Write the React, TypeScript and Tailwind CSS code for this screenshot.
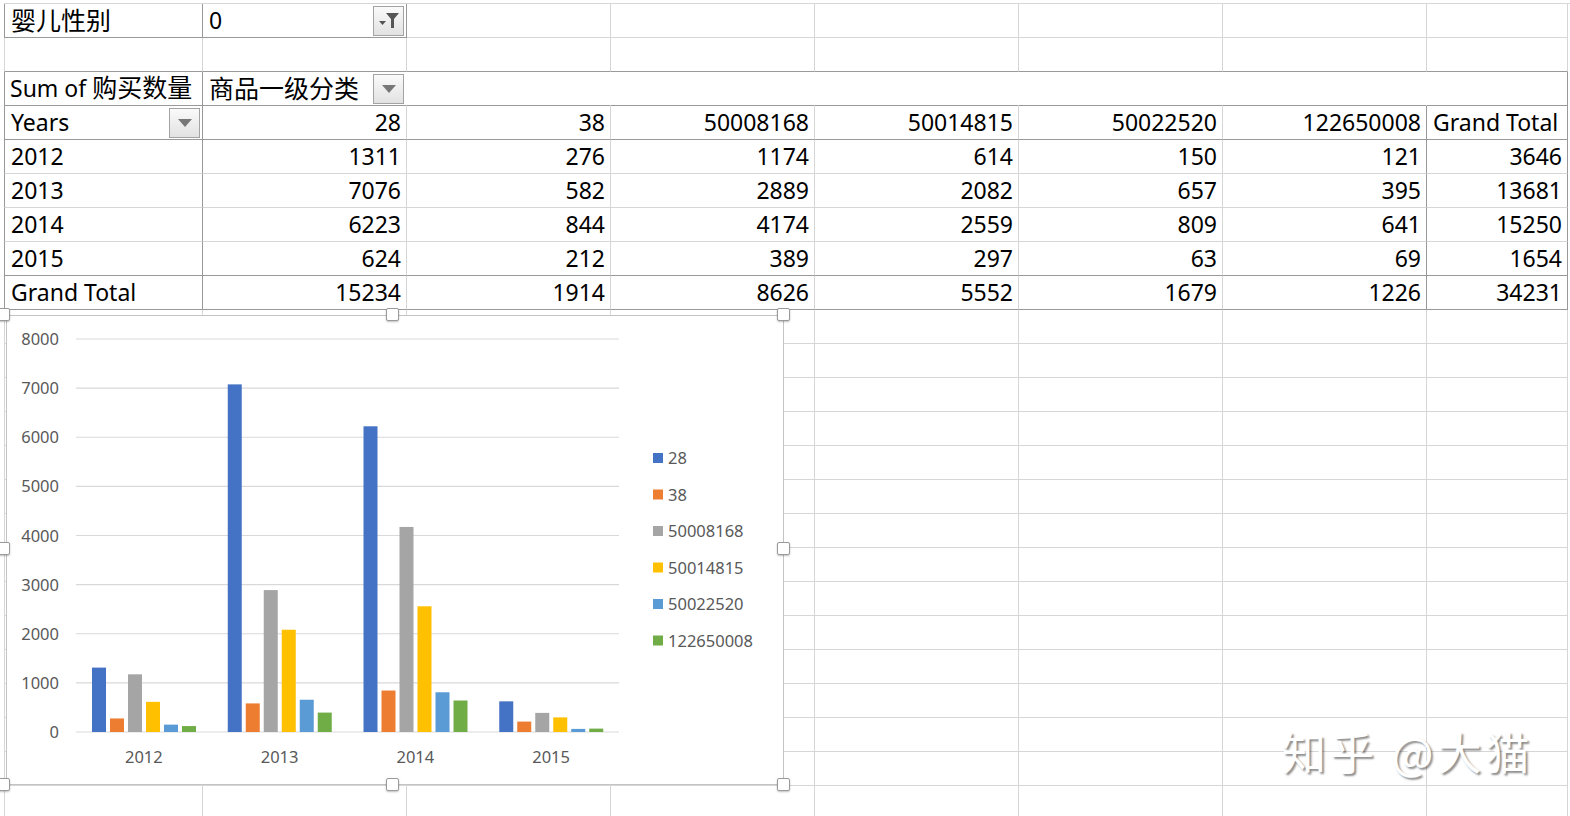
const DARK = 'dark';
const LIGHT = 'light';
const NONE = 'none';

const pivot: (string | number)[][] = [
  ['2012', 1311, 276, 1174, 614, 150, 121, 3646],
  ['2013', 7076, 582, 2889, 2082, 657, 395, 13681],
  ['2014', 6223, 844, 4174, 2559, 809, 641, 15250],
  ['2015', 624, 212, 389, 297, 63, 69, 1654],
  ['Grand Total', 15234, 1914, 8626, 5552, 1679, 1226, 34231],
];

const headers = ['28', '38', '50008168', '50014815', '50022520', '122650008'];
const seriesColors = ['#4472C4', '#ED7D31', '#A5A5A5', '#FFC000', '#5B9BD5', '#70AD47'];

const ROWS = 24;
const COLS = 8;

function rightBorder(r: number, c: number) {
  if (r === 0) return c <= 1 ? DARK : LIGHT;
  if (r === 2) return c === 0 || c === 7 ? DARK : NONE;
  if (r >= 3 && r <= 8) return c === 0 || c === 6 || c === 7 ? DARK : LIGHT;
  return LIGHT;
}

function bottomBorder(r: number, c: number) {
  if (r === 0) return c <= 1 ? DARK : LIGHT;
  if (r === 1 || r === 2 || r === 3 || r === 7 || r === 8) return DARK;
  return LIGHT;
}

const rCls = {
  dark: 'border-r-[#999999]',
  light: 'border-r-[#d6d6d6]',
  none: 'border-r-transparent',
};
const bCls = {
  dark: 'border-b-[#999999]',
  light: 'border-b-[#d6d6d6]',
  none: 'border-b-transparent',
};

const DropButton = ({ filter }: { filter?: boolean }) => (
  <div className="absolute right-[2px] top-[2px] w-[31px] h-[30px] border border-[#a3a3a3] bg-gradient-to-b from-[#fafafa] to-[#e2e2e2] flex items-center justify-center">
    {filter ? (
      <svg width="26" height="24" viewBox="0 0 26 24">
        <polygon points="3,12 10,12 6.5,16" fill="#555" />
        <polygon points="10,4 23,4 18,10 18,19 15,19 15,10" fill="#555" />
      </svg>
    ) : (
      <svg width="20" height="12" viewBox="0 0 20 12">
        <polygon points="3,2 17,2 10,10" fill="#777" />
      </svg>
    )}
  </div>
);

const Cjk = ({ children }: { children: string }) => (
  <span className="text-[25px] leading-none">{children}</span>
);

function cellContent(r: number, c: number) {
  if (r === 0) {
    if (c === 0) return <Cjk>婴儿性别</Cjk>;
    if (c === 1)
      return (
        <>
          <span>0</span>
          <DropButton filter />
        </>
      );
  }
  if (r === 2) {
    if (c === 0)
      return (
        <span className="-ml-[1px]">
          Sum of <Cjk>购买数量</Cjk>
        </span>
      );
    if (c === 1)
      return (
        <>
          <Cjk>商品一级分类</Cjk>
          <DropButton />
        </>
      );
  }
  if (r === 3) {
    if (c === 0)
      return (
        <>
          <span>Years</span>
          <DropButton />
        </>
      );
    if (c >= 1 && c <= 6) return <span className="ml-auto">{headers[c - 1]}</span>;
    if (c === 7) return <span>Grand Total</span>;
  }
  if (r >= 4 && r <= 8) {
    const v = pivot[r - 4][c];
    if (c === 0) return <span>{v}</span>;
    return <span className="ml-auto">{v}</span>;
  }
  return null;
}

// chart geometry, relative to the chart box
const CH_W = 778;
const CH_H = 470;
const baseY = 416;
const perUnit = 0.049125;
const plotL = 69;
const plotR = 612;
const catW = (plotR - plotL) / 4;

const ChartSvg = () => (
  <svg width={CH_W} height={CH_H} className="block" style={{ fontFamily: '"Noto Sans", sans-serif' }}>
    {[0, 1000, 2000, 3000, 4000, 5000, 6000, 7000, 8000].map((v) => {
      const y = baseY - v * perUnit;
      return (
        <g key={v}>
          <line x1={plotL} x2={plotR} y1={y} y2={y} stroke="#d9d9d9" strokeWidth="1.2" />
          <text x={52} y={y + 6} textAnchor="end" fontSize="16.5" fill="#595959">
            {v}
          </text>
        </g>
      );
    })}
    {pivot.slice(0, 4).map((row, i) => (
      <g key={i}>
        {row.slice(1, 7).map((v, j) => {
          const h = (v as number) * perUnit;
          return (
            <rect
              key={j}
              x={plotL + 16 + i * catW + j * 18}
              y={baseY - h}
              width={14}
              height={h}
              fill={seriesColors[j]}
            />
          );
        })}
        <text x={plotL + catW * (i + 0.5)} y={447} textAnchor="middle" fontSize="16.5" fill="#595959">
          {row[0]}
        </text>
      </g>
    ))}
    {headers.map((h, j) => {
      const cy = 142 + j * 36.5;
      return (
        <g key={h}>
          <rect x={646} y={cy - 5} width={10} height={10} fill={seriesColors[j]} />
          <text x={661} y={cy + 6} fontSize="16.5" fill="#595959">
            {h}
          </text>
        </g>
      );
    })}
  </svg>
);

const handle = 'absolute w-[13px] h-[13px] bg-white border border-[#9a9a9a] rounded-[2px] shadow-[0_1px_2px_rgba(0,0,0,0.25)]';

// floating chart object with its selection handles
const Chart = () => (
  <div className="absolute left-[3px] top-[314px] w-[781px] h-[471px]">
    <div className="absolute left-[3px] top-[1px] w-[778px] h-[470px] bg-white border border-[#c4c4c4]">
      <ChartSvg />
    </div>
    <div className={`${handle} -left-[6px] -top-[6px]`} />
    <div className={`${handle} left-[383px] -top-[6px]`} />
    <div className={`${handle} -right-[6px] -top-[6px]`} />
    <div className={`${handle} -left-[6px] top-[228px]`} />
    <div className={`${handle} -right-[6px] top-[228px]`} />
    <div className={`${handle} -left-[6px] -bottom-[6px]`} />
    <div className={`${handle} left-[383px] -bottom-[6px]`} />
    <div className={`${handle} -right-[6px] -bottom-[6px]`} />
  </div>
);

export default function App() {
  const cells = [];
  for (let r = 0; r < ROWS; r++) {
    for (let c = 0; c < COLS; c++) {
      const rb = rightBorder(r, c);
      const bb = bottomBorder(r, c);
      const leftDark = c === 0 && (r === 0 || (r >= 2 && r <= 8));
      const leftCls = c === 0 ? (leftDark ? 'border-l border-l-[#999999]' : 'border-l border-l-[#d6d6d6]') : '';
      cells.push(
        <div
          key={`${r}-${c}`}
          className={`relative h-[34px] border-b border-r ${rCls[rb as 'dark']} ${bCls[bb as 'dark']} ${leftCls} flex items-center pl-[6px] pr-[5px] whitespace-nowrap`}
        >
          {cellContent(r, c)}
        </div>
      );
    }
  }

  return (
    <div className="relative w-[1570px] h-[816px] overflow-hidden bg-white text-black text-[23px] font-['Noto_Sans','Noto_Sans_CJK_SC',sans-serif]">
      <div className="pt-[3px] pl-[4px]">
        <div className="grid grid-cols-[199px_204px_204px_204px_204px_204px_204px_141px] border-t border-t-[#d6d6d6]">
          {cells}
        </div>
      </div>

      <Chart />

      <div className="absolute left-[1282px] top-[718px] text-[44px] tracking-[4px] text-white font-['Noto_Sans_CJK_SC',sans-serif] [text-shadow:2px_2px_2px_rgba(0,0,0,0.45)]">
        知乎 @大猫
      </div>
    </div>
  );
}
